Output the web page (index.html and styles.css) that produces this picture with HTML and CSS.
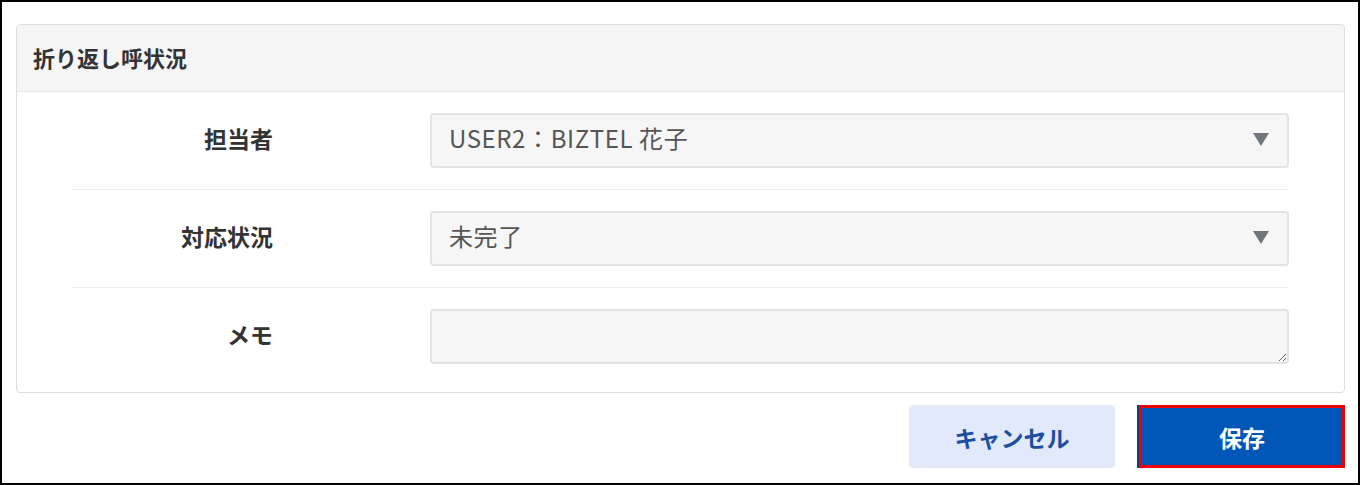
FILE: index.html
```html
<!DOCTYPE html>
<html lang="ja">
<head>
  <meta charset="UTF-8" />
  <title>折り返し呼状況</title>
  <link rel="stylesheet" href="styles.css">
</head>
<body>

  <div class="frame">
    <div class="panel">
      <div class="panel-header">折り返し呼状況</div>

      <div class="panel-body">
        <div class="form-row">
          <label class="form-label" for="owner">担当者</label>
          <div class="select-wrap">
            <select id="owner" class="form-select">
              <option>USER2：BIZTEL 花子</option>
            </select>
          </div>
        </div>

        <div class="form-row">
          <label class="form-label" for="status">対応状況</label>
          <div class="select-wrap">
            <select id="status" class="form-select">
              <option>未完了</option>
            </select>
          </div>
        </div>

        <div class="form-row">
          <label class="form-label" for="memo">メモ</label>
          <textarea id="memo" class="form-textarea"></textarea>
        </div>
      </div>
    </div>

    <div class="actions">
      <button type="button" class="btn btn-cancel">キャンセル</button>
      <button type="button" class="btn btn-save">保存</button>
    </div>
  </div>

</body>
</html>
```

FILE: styles.css
```css
/* Basic Reset & Font */
* {
  box-sizing: border-box;
  margin: 0;
  padding: 0;
}

body {
  font-family: 'Noto Sans CJK JP', 'Noto Sans', sans-serif;
  background: #fff;
  color: #333;
}

/* Outer frame of the screenshot */
.frame {
  width: 1360px;
  height: 485px;
  border: 2px solid #000;
  padding: 22px 13px 0 14px;
}

/* Panel */
.panel {
  border: 1px solid #dedede;
  border-radius: 4px;
  background: #fff;
}

.panel-header {
  height: 67px;
  display: flex;
  align-items: center;
  padding: 0 0 2px 16px;
  background-color: #f5f5f5;
  border-bottom: 1px solid #e8e8e8;
  border-radius: 4px 4px 0 0;
  font-size: 22px;
  font-weight: bold;
  color: #333;
}

.panel-body {
  padding: 0 55px 7px 55px;
}

/* Rows */
.form-row {
  display: grid;
  grid-template-columns: 201px 1fr;
  column-gap: 157px;
  align-items: center;
  padding: 21px 0;
  border-bottom: 1px solid #ececec;
}

.form-row:last-child {
  border-bottom: none;
}

.form-label {
  text-align: right;
  padding-bottom: 6px;
  font-size: 23px;
  font-weight: bold;
  color: #333;
}

/* Select boxes */
.select-wrap {
  position: relative;
}

.select-wrap::after {
  content: '';
  position: absolute;
  right: 20px;
  top: 50%;
  margin-top: -8px;
  border-left: 8px solid transparent;
  border-right: 8px solid transparent;
  border-top: 13px solid #70767c;
  pointer-events: none;
}

.form-select,
.form-textarea {
  display: block;
  width: 100%;
  height: 55px;
  border: 2px solid #e3e3e3;
  border-radius: 4px;
  background-color: #f6f6f6;
  font-family: inherit;
  font-size: 24px;
  letter-spacing: 0.6px;
  color: #555;
  outline: none;
}

.form-select {
  appearance: none;
  -webkit-appearance: none;
  padding: 0 50px 6px 17px;
}

.form-textarea {
  resize: vertical;
  padding: 10px 17px;
}

/* Buttons */
.actions {
  display: flex;
  justify-content: flex-end;
  gap: 24px;
  margin-top: 12px;
}

.btn {
  width: 206px;
  height: 63px;
  border: none;
  border-radius: 4px;
  font-family: inherit;
  font-size: 23px;
  font-weight: bold;
  cursor: pointer;
}

.btn-cancel {
  background-color: #e1e9fb;
  color: #1c4f9f;
}

.btn-save {
  background-color: #0057b7;
  color: #fff;
  border: 3px solid #ee0000;
  border-radius: 0;
  box-shadow: -2px 0 0 #0b3f86;
}
```
